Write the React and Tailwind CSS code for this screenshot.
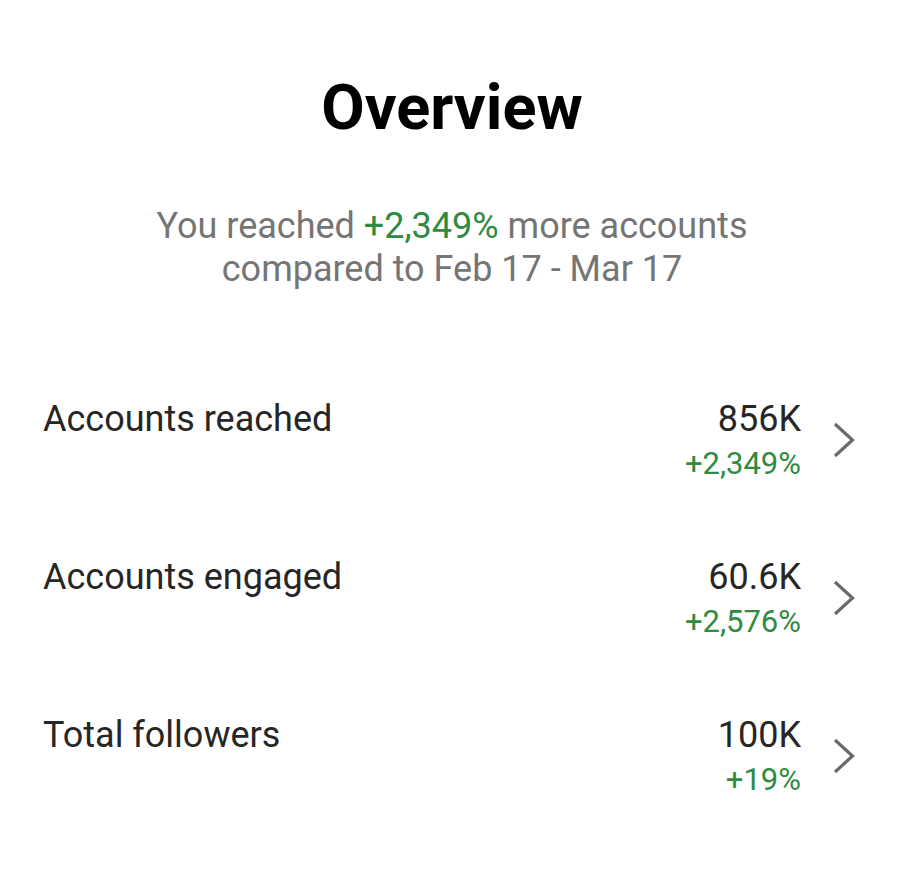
import React from "react";

function Chevron() {
  return (
    <svg width="22" height="36" viewBox="0 0 22 36" fill="none" className="block">
      <path d="M2 2 L19.5 18 L2 34" stroke="#6a6a6a" strokeWidth="3.2" strokeLinecap="butt" strokeLinejoin="miter" />
    </svg>
  );
}

function Row({ label, value, pct }) {
  return (
    <div className="flex items-start h-[158px]">
      <div className="flex-1 text-[36px] leading-[40px] text-[#262626]">{label}</div>
      <div className="flex flex-col items-end">
        <div className="text-[36px] leading-[40px] text-[#262626]">{value}</div>
        <div className="text-[31px] leading-[34px] text-[#2e8b3f] mt-[8px]">{pct}</div>
      </div>
      <div className="ml-[32px] mt-[23px]">
        <Chevron />
      </div>
    </div>
  );
}

export default function App() {
  return (
    <div className="w-[904px] h-[886px] bg-white overflow-hidden" style={{ fontFamily: "Roboto, 'Noto Sans', sans-serif" }}>
      <div className="pt-[72px] text-center text-[63px] leading-[72px] font-bold text-black">Overview</div>
      <div className="mt-[61px] text-center text-[36px] leading-[43px] text-[#757575]">
        You reached <span className="text-[#2e8b3f]">+2,349%</span> more accounts
        <br />
        compared to Feb 17 - Mar 17
      </div>
      <div className="mt-[108px] pl-[43px] pr-[49px]">
        <Row label="Accounts reached" value="856K" pct="+2,349%" />
        <Row label="Accounts engaged" value="60.6K" pct="+2,576%" />
        <Row label="Total followers" value="100K" pct="+19%" />
      </div>
    </div>
  );
}
